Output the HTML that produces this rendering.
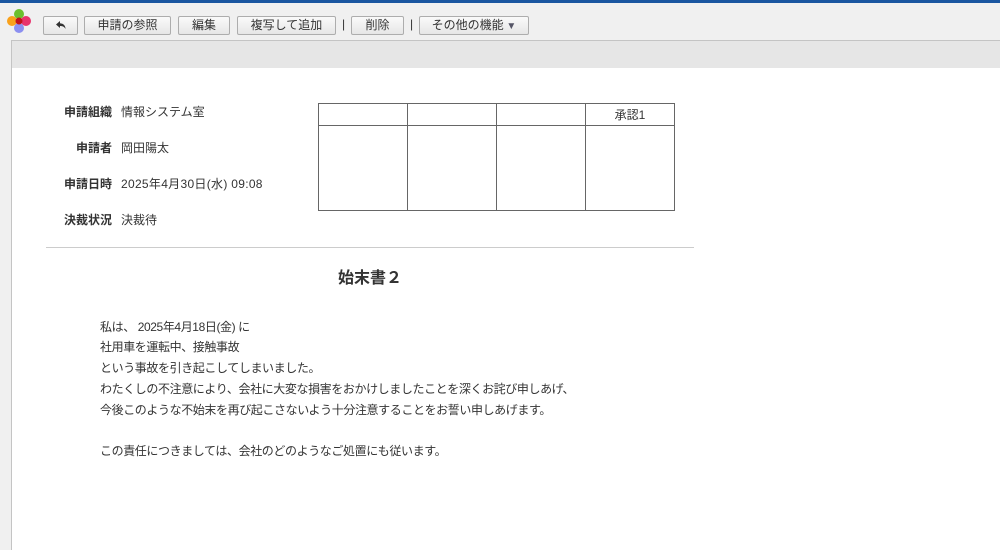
<!DOCTYPE html>
<html><head><meta charset="utf-8"><style>
*{margin:0;padding:0;box-sizing:border-box}
body{width:1000px;height:550px;overflow:hidden;background:#f0f0f0;font-family:"Liberation Sans","Noto Sans CJK JP",sans-serif;font-size:12px;color:#333;position:relative}
.topline{position:absolute;left:0;top:0;width:1000px;height:3px;background:#1a56a0}
.btn{position:absolute;top:16px;height:19px;border:1px solid #adadad;border-radius:2px;background:linear-gradient(#fafafa,#e6e6e6);font-size:12px;line-height:17px;text-align:center;color:#333}
.sep{position:absolute;top:17px;font-size:12px;color:#333}
.band{position:absolute;left:11px;top:40px;width:989px;height:29px;background:#e6e6e6;border:1px solid #c4c4c4;border-right:none}
.main{position:absolute;left:11px;top:68px;width:989px;height:482px;background:#fff;border-left:1px solid #c4c4c4}
.lbl{position:absolute;font-weight:bold;text-align:right;width:72px;left:40px;color:#333}
.val{position:absolute;left:121px}
table{position:absolute;left:318px;top:103px;border-collapse:collapse}
td{border:1px solid #666;width:89px;font-size:12px;text-align:center}
.p{position:absolute;left:100px;font-size:12px;letter-spacing:-0.4px}
</style></head><body>
<div class="topline"></div>
<svg style="position:absolute;left:6px;top:8px" width="26" height="26" viewBox="0 0 26 26">
<circle cx="13" cy="6" r="5" fill="#6cbf2d"/><circle cx="6" cy="13" r="5" fill="#f9a11b"/><circle cx="20" cy="13" r="5" fill="#e8336d"/><circle cx="13" cy="20" r="5" fill="#8b8ff0"/><circle cx="13" cy="13" r="3.5" fill="#c4121a"/></svg>
<div class="btn" style="left:43px;width:35px"><svg width="12" height="12" viewBox="0 0 12 12" style="margin-top:2px"><path d="M5 2 L1 5.5 L5 9 V7 C8 7 9.5 8 10.5 10 C10.5 6.5 8.5 4.5 5 4.2 Z" fill="#333"/></svg></div>
<div class="btn" style="left:84px;width:87px">申請の参照</div>
<div class="btn" style="left:178px;width:52px">編集</div>
<div class="btn" style="left:237px;width:99px">複写して追加</div>
<div class="sep" style="left:342px">|</div>
<div class="btn" style="left:351px;width:53px">削除</div>
<div class="sep" style="left:410px">|</div>
<div class="btn" style="left:419px;width:110px">その他の機能<span style="font-size:10px;color:#556"> ▼</span></div>
<div class="band"></div>
<div class="main"></div>
<div class="lbl" style="top:103px">申請組織</div><div class="val" style="top:103px">情報システム室</div>
<div class="lbl" style="top:139px">申請者</div><div class="val" style="top:139px">岡田陽太</div>
<div class="lbl" style="top:175px">申請日時</div><div class="val" style="top:175px;letter-spacing:0.3px">2025年4月30日(水) 09:08</div>
<div class="lbl" style="top:211px">決裁状況</div><div class="val" style="top:211px">決裁待</div>
<table><tr style="height:22px"><td></td><td></td><td></td><td>承認1</td></tr><tr style="height:85px"><td></td><td></td><td></td><td></td></tr></table>
<div style="position:absolute;left:46px;top:247px;width:648px;height:1px;background:#ccc"></div>
<div style="position:absolute;left:0;width:740px;top:264px;text-align:center;font-size:16px;font-weight:bold">始末書２</div>
<div class="p" style="top:318px">私は、 2025年4月18日(金) に</div>
<div class="p" style="top:338px"> 社用車を運転中、接触事故</div>
<div class="p" style="top:359px">という事故を引き起こしてしまいました。</div>
<div class="p" style="top:380px">わたくしの不注意により、会社に大変な損害をおかけしましたことを深くお詫び申しあげ、</div>
<div class="p" style="top:401px">今後このような不始末を再び起こさないよう十分注意することをお誓い申しあげます。</div>
<div class="p" style="top:442px">この責任につきましては、会社のどのようなご処置にも従います。</div>
</body></html>
